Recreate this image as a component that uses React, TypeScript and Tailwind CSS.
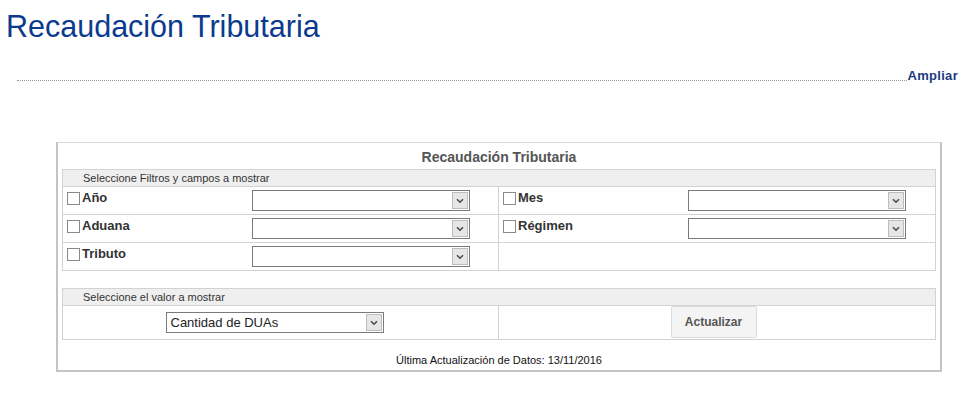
import React from "react";

function Chevron() {
  return (
    <svg width="8" height="6" viewBox="0 0 8 6" className="block">
      <path d="M1 1.2 L4 4.2 L7 1.2" fill="none" stroke="#4a4a4a" strokeWidth="1.6" />
    </svg>
  );
}

function FakeSelect({ value = "", className = "" }: { value?: string; className?: string }) {
  return (
    <div
      className={`flex h-[21px] w-[218px] items-stretch border border-[#7a7a7a] bg-white ${className}`}
    >
      <div className="flex flex-1 items-center pl-[4px] text-[13px] text-[#222]">{value}</div>
      <div className="m-[1px] flex w-[16px] items-center justify-center border border-[#bdbdbd] bg-[#e6e6e6]">
        <Chevron />
      </div>
    </div>
  );
}

function Check() {
  return <span className="inline-block h-[13px] w-[13px] shrink-0 border border-[#8a8a8a] bg-white" />;
}

function FilterCell({ label }: { label?: string }) {
  if (!label) return <div className="h-[27px]" />;
  return (
    <div className="grid h-[27px] grid-cols-[185px_218px] items-start pl-[4px] pt-[3px]">
      <div className="flex items-center gap-[2px] pt-[1px]">
        <Check />
        <span className="text-[13px] font-bold leading-[14px] text-[#333]">{label}</span>
      </div>
      <FakeSelect />
    </div>
  );
}

export default function App() {
  return (
    <div className="w-[963px] h-[393px] bg-white" style={{ fontFamily: '"Liberation Sans", Arial, sans-serif' }}>
      <h1 className="pl-[6px] pt-[9px] text-[30.5px] leading-[34px] text-[#0c3a8d]">Recaudación Tributaria</h1>

      <div className="mt-[26px] flex items-end pl-[17px] pr-[5px]">
        <div className="mb-[2px] flex-1 border-b border-dotted border-[#9a9a9a]" />
        <span className="text-[13px] font-bold leading-[14px] tracking-[0.3px] text-[#1b3b7e]">Ampliar</span>
      </div>

      <div className="ml-[56px] mt-[59px] w-[886px] border-x-2 border-b-2 border-t border-x-[#c4c4c4] border-b-[#c4c4c4] border-t-[#d6d6d6] px-[4px]">
        <div className="pt-[5px] text-center text-[14px] font-bold leading-[18px] text-[#555]">
          Recaudación Tributaria
        </div>

        <div className="mt-[3px] border border-[#d2d2d2]">
          <div className="h-[17px] border-b border-[#d2d2d2] bg-[#efefef] pl-[20px] text-[11px] leading-[16px] text-[#333]">
            Seleccione Filtros y campos a mostrar
          </div>
          <div className="grid grid-cols-2">
            <div className="border-b border-r border-[#d2d2d2]"><FilterCell label="Año" /></div>
            <div className="border-b border-[#d2d2d2]"><FilterCell label="Mes" /></div>
            <div className="border-b border-r border-[#d2d2d2]"><FilterCell label="Aduana" /></div>
            <div className="border-b border-[#d2d2d2]"><FilterCell label="Régimen" /></div>
            <div className="border-r border-[#d2d2d2]"><FilterCell label="Tributo" /></div>
            <div><FilterCell /></div>
          </div>
        </div>

        <div className="mt-[17px] border border-[#d2d2d2]">
          <div className="h-[17px] border-b border-[#d2d2d2] bg-[#efefef] pl-[20px] text-[11px] leading-[16px] text-[#333]">
            Seleccione el valor a mostrar
          </div>
          <div className="grid h-[33px] grid-cols-2">
            <div className="flex items-center justify-center border-r border-[#d2d2d2] pr-[12px]">
              <FakeSelect value="Cantidad de DUAs" className="h-[20px]" />
            </div>
            <div className="flex items-start justify-center pr-[7px]">
              <button className="h-[32px] w-[86px] rounded-[2px] border border-[#dcdcdc] bg-[#f4f4f4] text-[12px] font-bold text-[#555]">
                Actualizar
              </button>
            </div>
          </div>
        </div>

        <div className="pb-[3px] pt-[14px] text-center text-[11px] leading-[13px] text-[#111]">
          Última Actualización de Datos: 13/11/2016
        </div>
      </div>
    </div>
  );
}
